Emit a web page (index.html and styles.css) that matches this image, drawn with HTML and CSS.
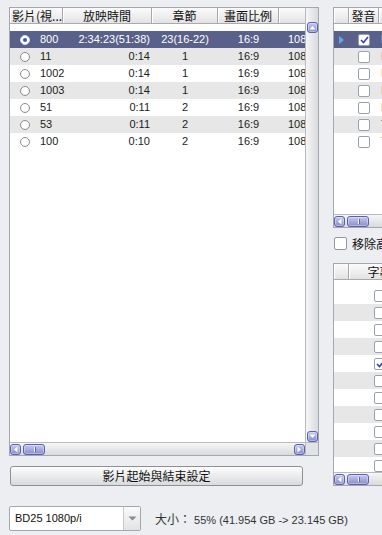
FILE: index.html
```html
<!DOCTYPE html>
<html lang="zh-Hant">
<head>
<meta charset="utf-8">
<title>影片設定</title>
<link rel="stylesheet" href="styles.css">
</head>
<body>
<div class="app">
  <div class="left">
    <div class="lv">
      <div class="main">
        <div class="head">
          <div class="hc w1 lft">影片(視...</div>
          <div class="hc w2">放映時間</div>
          <div class="hc w3">章節</div>
          <div class="hc w4">畫面比例</div>
          <div class="hc w5"></div>
        </div>
        <div class="body">
          <div class="row sel"><div class="c w1"><span class="radio on"></span>800</div><div class="c w2 r">2:34:23(51:38)</div><div class="c w3 m">23(16-22)</div><div class="c w4 m">16:9</div><div class="c w5">1080p</div></div>
          <div class="row"><div class="c w1"><span class="radio"></span>11</div><div class="c w2 r">0:14</div><div class="c w3 m">1</div><div class="c w4 m">16:9</div><div class="c w5">1080p</div></div>
          <div class="row"><div class="c w1"><span class="radio"></span>1002</div><div class="c w2 r">0:14</div><div class="c w3 m">1</div><div class="c w4 m">16:9</div><div class="c w5">1080p</div></div>
          <div class="row"><div class="c w1"><span class="radio"></span>1003</div><div class="c w2 r">0:14</div><div class="c w3 m">1</div><div class="c w4 m">16:9</div><div class="c w5">1080p</div></div>
          <div class="row"><div class="c w1"><span class="radio"></span>51</div><div class="c w2 r">0:11</div><div class="c w3 m">2</div><div class="c w4 m">16:9</div><div class="c w5">1080p</div></div>
          <div class="row"><div class="c w1"><span class="radio"></span>53</div><div class="c w2 r">0:11</div><div class="c w3 m">2</div><div class="c w4 m">16:9</div><div class="c w5">1080p</div></div>
          <div class="row"><div class="c w1"><span class="radio"></span>100</div><div class="c w2 r">0:10</div><div class="c w3 m">2</div><div class="c w4 m">16:9</div><div class="c w5">1080p</div></div>
        </div>
      </div>
      <div class="vscroll">
        <span class="sbtn"><svg width="7" height="5" viewBox="0 0 7 5"><path d="M0.5 4.5 L3.5 1 L6.5 4.5Z" fill="#fff"/></svg></span>
        <span class="sbtn"><svg width="7" height="5" viewBox="0 0 7 5"><path d="M0.5 0.5 L3.5 4 L6.5 0.5Z" fill="#fff"/></svg></span>
      </div>
      <div class="hscroll">
        <span class="sbtn"><svg width="5" height="7" viewBox="0 0 5 7"><path d="M4.5 0.5 L1 3.5 L4.5 6.5Z" fill="#fff"/></svg></span>
        <span class="thumb"><i></i></span>
        <span class="grow"></span>
        <span class="sbtn"><svg width="5" height="7" viewBox="0 0 5 7"><path d="M0.5 0.5 L4 3.5 L0.5 6.5Z" fill="#fff"/></svg></span>
      </div>
      <div class="corner"></div>
    </div>
    <div class="btn">影片起始與結束設定</div>
    <div class="bottom">
      <div class="combo"><span class="combo-text">BD25 1080p/i</span><span class="combo-btn"><svg width="9" height="5" viewBox="0 0 9 5"><path d="M0.5 0.5 L4.5 4.5 L8.5 0.5Z" fill="#8a8a8a"/></svg></span></div>
      <div class="size"><span class="cjk">大小：</span> 55% (41.954 GB -&gt; 23.145 GB)</div>
    </div>
  </div>

  <div class="right">
    <div class="tbl t1">
      <div class="main">
        <div class="head">
          <div class="hc a0"></div>
          <div class="hc a1">發音</div>
          <div class="hc a2">格式</div>
        </div>
        <div class="body">
          <div class="row sel"><div class="c a0"><span class="tri"></span></div><div class="c a1 m"><span class="cb on"><svg width="9" height="8" viewBox="0 0 9 8"><path d="M1 4 L3.5 6.5 L8 1" stroke="#3b3bc4" stroke-width="1.6" fill="none"/></svg></span></div><div class="c a2">Dolby TrueHD</div></div>
          <div class="row"><div class="c a0"></div><div class="c a1 m"><span class="cb"></span></div><div class="c a2 purple">Dolby Digital</div></div>
          <div class="row"><div class="c a0"></div><div class="c a1 m"><span class="cb"></span></div><div class="c a2 gold">LPCM</div></div>
          <div class="row"><div class="c a0"></div><div class="c a1 m"><span class="cb"></span></div><div class="c a2 gold">LPCM</div></div>
          <div class="row"><div class="c a0"></div><div class="c a1 m"><span class="cb"></span></div><div class="c a2 gold">LPCM</div></div>
          <div class="row"><div class="c a0"></div><div class="c a1 m"><span class="cb"></span></div><div class="c a2">TrueHD</div></div>
          <div class="row"><div class="c a0"></div><div class="c a1 m"><span class="cb"></span></div><div class="c a2 gold">TrueHD</div></div>
        </div>
      </div>
      <div class="hscroll">
        <span class="sbtn"><svg width="5" height="7" viewBox="0 0 5 7"><path d="M4.5 0.5 L1 3.5 L4.5 6.5Z" fill="#fff"/></svg></span>
        <span class="thumb"><i></i></span>
        <span class="grow"></span>
      </div>
    </div>

    <label class="opt"><span class="box"></span>移除高清音軌</label>

    <div class="tbl t2">
      <div class="main">
        <div class="head">
          <div class="hc a0"></div>
          <div class="hc b1">字幕</div>
          <div class="hc a2">語言</div>
        </div>
        <div class="body">
          <div class="row"><div class="c a0"></div><div class="c b1 m"><span class="cb"></span></div><div class="c a2"></div></div>
          <div class="row"><div class="c a0"></div><div class="c b1 m"><span class="cb"></span></div><div class="c a2"></div></div>
          <div class="row"><div class="c a0"></div><div class="c b1 m"><span class="cb"></span></div><div class="c a2"></div></div>
          <div class="row"><div class="c a0"></div><div class="c b1 m"><span class="cb"></span></div><div class="c a2"></div></div>
          <div class="row"><div class="c a0"></div><div class="c b1 m"><span class="cb on"><svg width="9" height="8" viewBox="0 0 9 8"><path d="M1 4 L3.5 6.5 L8 1" stroke="#3b3bc4" stroke-width="1.6" fill="none"/></svg></span></div><div class="c a2"></div></div>
          <div class="row"><div class="c a0"></div><div class="c b1 m"><span class="cb"></span></div><div class="c a2"></div></div>
          <div class="row"><div class="c a0"></div><div class="c b1 m"><span class="cb"></span></div><div class="c a2"></div></div>
          <div class="row"><div class="c a0"></div><div class="c b1 m"><span class="cb"></span></div><div class="c a2"></div></div>
          <div class="row"><div class="c a0"></div><div class="c b1 m"><span class="cb"></span></div><div class="c a2"></div></div>
          <div class="row"><div class="c a0"></div><div class="c b1 m"><span class="cb"></span></div><div class="c a2"></div></div>
          <div class="row"><div class="c a0"></div><div class="c b1 m"><span class="cb"></span></div><div class="c a2"></div></div>
        </div>
      </div>
      <div class="hscroll">
        <span class="sbtn"><svg width="5" height="7" viewBox="0 0 5 7"><path d="M4.5 0.5 L1 3.5 L4.5 6.5Z" fill="#fff"/></svg></span>
        <span class="thumb"><i></i></span>
        <span class="grow"></span>
      </div>
    </div>
  </div>
</div>
</body>
</html>
```

FILE: styles.css
```css
* { box-sizing: border-box; margin: 0; padding: 0; }

body {
  width: 382px;
  height: 535px;
  overflow: hidden;
  background: #eceef1;
  font: 11px "Liberation Sans", "Noto Sans CJK TC", sans-serif;
  color: #1c1c1c;
}

.app {
  display: flex;
  gap: 14px;
  padding: 7px 0 0 9px;
  width: 560px;
}

.left {
  width: 310px;
  flex-shrink: 0;
  display: flex;
  flex-direction: column;
}

.right {
  width: 200px;
  flex-shrink: 0;
  display: flex;
  flex-direction: column;
}

/* list view */
.lv {
  height: 449px;
  border: 1px solid #a3a7ae;
  background: #fff;
  display: grid;
  grid-template-columns: 1fr 13px;
  grid-template-rows: 1fr 13px;
}

.main {
  overflow: hidden;
  display: flex;
  flex-direction: column;
  min-width: 0;
}

.head {
  display: flex;
  height: 16px;
  flex-shrink: 0;
  background: linear-gradient(#fbfbfb, #e3e3e3);
  border-bottom: 1px solid #aaa;
}

.hc {
  height: 100%;
  flex-shrink: 0;
  border-right: 1px solid #a9a9a9;
  box-shadow: inset 1px 0 #fff;
  line-height: 15px;
  text-align: center;
  white-space: nowrap;
  overflow: hidden;
  color: #111;
  font-family: "Noto Sans CJK TC", sans-serif;
  font-size: 12px;
}

.hc.lft { text-align: left; padding-left: 2px; }

.body { padding-top: 7px; }

.row {
  display: flex;
  height: 17px;
  line-height: 17px;
}

.row:nth-child(even) { background: #e7e7e7; }
.row.sel { background: #596089; color: #fff; }

.c {
  flex-shrink: 0;
  white-space: nowrap;
  overflow: hidden;
  display: flex;
  align-items: center;
}

.c.r { justify-content: flex-end; padding-right: 2px; }
.c.m { justify-content: center; }

.w1 { width: 53px; }
.w2 { width: 89px; }
.w3 { width: 66px; }
.w4 { width: 61px; }
.w5 { width: 60px; }
.c.w1 { overflow: visible; }
.c.w5 { padding-left: 9px; }

.radio {
  width: 10px;
  height: 10px;
  flex-shrink: 0;
  border: 1px solid #8e8e8e;
  border-radius: 50%;
  background: radial-gradient(circle at 50% 40%, #fff 50%, #e6e6e6);
  margin: 0 10px 0 10px;
  display: inline-flex;
  align-items: center;
  justify-content: center;
}

.radio.on { border-color: #d8dbe8; background: #fff; }
.radio.on::after {
  content: "";
  width: 4px;
  height: 4px;
  border-radius: 50%;
  background: #3f57c8;
}

/* scrollbars */
.vscroll {
  background: linear-gradient(90deg, #f6f6f7, #d9dadd);
  border-left: 1px solid #b7bac0;
  display: flex;
  flex-direction: column;
  justify-content: space-between;
  align-items: center;
  padding-top: 14px;
}

.hscroll {
  background: linear-gradient(#f6f6f7, #d9dadd);
  border-top: 1px solid #b7bac0;
  display: flex;
  align-items: center;
}

.grow { flex: 1; }

.corner {
  background: #e2e3e6;
  border-top: 1px solid #b7bac0;
  border-left: 1px solid #b7bac0;
}

.sbtn {
  width: 11px;
  height: 11px;
  flex-shrink: 0;
  border: 1px solid #5b61a7;
  border-radius: 3px;
  background: linear-gradient(#c6c9f0, #878dcf);
  box-shadow: inset 0 0 0 1px rgba(255,255,255,0.35);
  display: flex;
  align-items: center;
  justify-content: center;
}

.thumb {
  width: 22px;
  height: 11px;
  flex-shrink: 0;
  margin-left: 2px;
  border: 1px solid #5b61a7;
  border-radius: 3px;
  background: linear-gradient(#c6c9f0, #878dcf);
  box-shadow: inset 0 0 0 1px rgba(255,255,255,0.35);
  display: flex;
  align-items: center;
  justify-content: center;
}

.thumb i {
  width: 1px;
  height: 5px;
  background: #f4f4ff;
  box-shadow: 1px 0 #5b61a7;
}

/* button */
.btn {
  margin: 10px 0 0 1px;
  width: 293px;
  height: 20px;
  border: 1px solid #8e9093;
  border-radius: 3px;
  background: linear-gradient(#fdfdfd, #d9dadc);
  text-align: center;
  line-height: 18px;
  font-family: "Noto Sans CJK TC", sans-serif;
  font-size: 12px;
  color: #111;
}

.bottom {
  margin-top: 20px;
  display: flex;
  align-items: center;
}

.combo {
  width: 132px;
  height: 25px;
  flex-shrink: 0;
  border: 1px solid #a5a6a8;
  border-radius: 2px;
  background: #fff;
  display: flex;
}

.combo-text {
  flex: 1;
  padding-left: 5px;
  line-height: 23px;
  white-space: nowrap;
  color: #111;
}

.combo-btn {
  width: 17px;
  flex-shrink: 0;
  border-left: 1px solid #c7c8ca;
  background: linear-gradient(#fafafa, #e2e3e5);
  display: flex;
  align-items: center;
  justify-content: center;
}

.size {
  margin-left: 14px;
  color: #333;
  white-space: nowrap;
}

.cjk {
  font-family: "Noto Sans CJK TC", sans-serif;
  font-size: 12px;
}

/* right tables */
.tbl {
  border: 1px solid #a3a7ae;
  background: #fff;
  display: grid;
  grid-template-rows: 1fr 13px;
}

.t1 { height: 221px; }
.t2 { height: 223px; margin-top: 13px; }

.a0 { width: 15px; }
.a1 { width: 30px; }
.b1 { width: 62px; }
.a2 { width: 90px; }
.c.a2 { padding-left: 2px; color: #2a2a8a; }
.c.a2.gold { color: #b58a1a; }
.c.a2.purple { color: #6a3a9a; }
.row.sel .c.a2 { color: #fff; }
.c.a0 { justify-content: center; }

.tri {
  width: 0;
  height: 0;
  border-top: 4.5px solid transparent;
  border-bottom: 4.5px solid transparent;
  border-left: 5px solid #5ea9ea;
}

.cb {
  width: 12px;
  height: 12px;
  border: 1px solid #97a1b0;
  border-radius: 2px;
  background: #fff;
  display: flex;
  align-items: center;
  justify-content: center;
}

.opt {
  margin-top: 8px;
  height: 14px;
  display: flex;
  align-items: center;
  gap: 5px;
  font-family: "Noto Sans CJK TC", sans-serif;
  font-size: 12px;
  white-space: nowrap;
  color: #111;
}

.opt .box {
  width: 13px;
  height: 13px;
  border: 1px solid #8d97a6;
  border-radius: 2px;
  background: #fff;
  margin-left: 1px;
}
```
